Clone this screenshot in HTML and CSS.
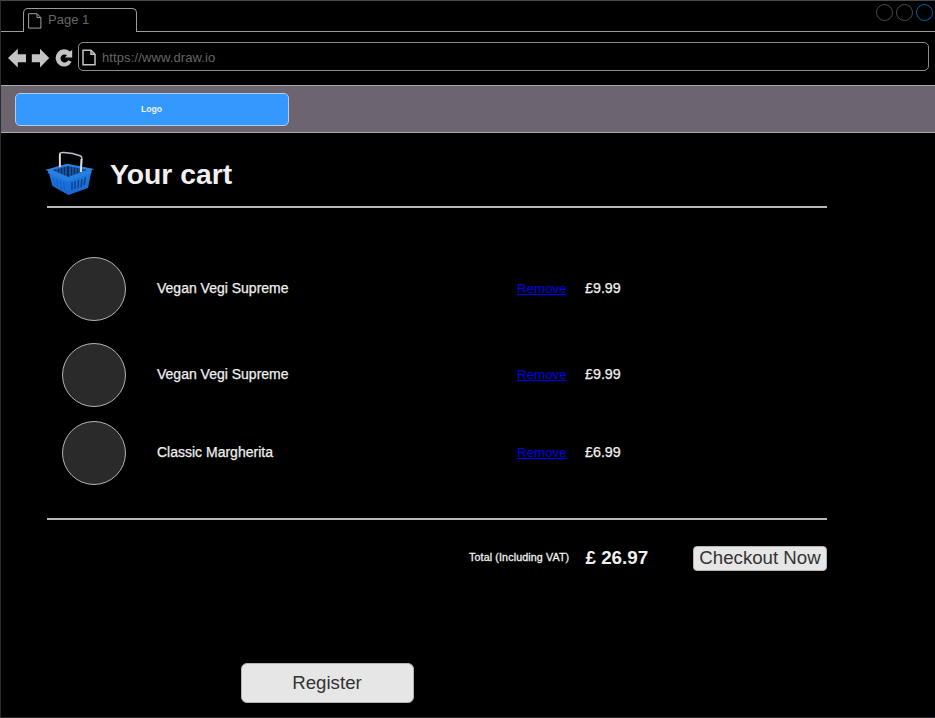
FILE: index.html
```html
<!DOCTYPE html>
<html lang="en">
<head>
<meta charset="utf-8">
<title>Your cart</title>
<link rel="stylesheet" href="styles.css">
</head>
<body>
<div class="window">
  <header class="tabs">
    <div class="tab-lead"></div>
    <div class="tab">
      <svg width="14" height="16" viewBox="0 0 14 16"><path d="M.6.7H9L12.9 4.6V15.1H.6ZM9 .7V4.6H12.9" fill="none" stroke="#a0a0a0"/></svg>
      <span>Page 1</span>
    </div>
    <div class="tab-rest">
      <i class="dot"></i><i class="dot"></i><i class="dot blue"></i>
    </div>
  </header>
  <div class="toolbar">
    <svg class="nav" width="78" height="28" viewBox="0 42 78 28">
      <g fill="#c4c4c4"><path d="M8 58L17.8 48.7V54.2H26V62.2H17.8V67.4Z"/><path d="M49.2 58L40 48.7V54.2H31.8V62.2H40V67.4Z"/><path d="M72.2 50V57.5H64.7L67 55.4A4 4 0 1 0 68.2 60.2L71.6 61.8A8.4 8.6 0 1 1 69.8 51.6Z"/></g>
    </svg>
    <div class="address">
      <svg width="14" height="17" viewBox="0 0 14 17"><path d="M1 1.3H9L13 5.3V15.7H1ZM9 1.3V5.3H13" fill="none" stroke="#c4c4c4" stroke-width="1.5"/></svg>
      <span>https://www.draw.io</span>
    </div>
  </div>
  <div class="brand"><div class="logo">Logo</div></div>
  <main>
    <div class="heading">
      <svg width="48" height="46" viewBox="46 150 48 46">
        <defs><linearGradient id="front" x2="0" y2="1"><stop stop-color="#2383ed"/><stop offset="1" stop-color="#1765d2"/></linearGradient></defs>
        <path d="M47.5 170L67 164L92 169L91 173L88 188L68.5 195L52.5 186L49 173Z" fill="url(#front)"/>
        <path d="M53 170L68 166L87 170L68 177Z" fill="#092e62"/>
        <path d="M57 168V173M60 167V174M63 166.5V175M66 166V176M70 166V176M73 167V175M76 168V174M79 168V173M83 169V172" stroke="#2874c9"/>
        <path d="M48 170L67 164.7L91.3 169.3L68.5 178Z" fill="none" stroke="#2c80dc" stroke-width="1.8"/>
        <path d="M48 172L68.5 180L91.3 171.5" fill="none" stroke="#277fe2" stroke-width="2.4"/>
        <path d="M53 178L55 185M56.5 179L58 187M60 180L61.5 189M63.5 182L64.5 190" stroke="#155dbb"/>
        <path d="M72 182V190M75 181V189M78.5 180L78 188M82 179L81 187M85.5 177L84 185" stroke="#104288" stroke-width="1.5"/>
        <path d="M59.8 167V153.8Q60 152.3 64 152.5Q73 153 80 155.8Q82 156.5 81.8 159L81 172" fill="none" stroke="#b9c0d0" stroke-width="1.5"/>
        <path d="M59.8 154V167M81.4 159L80.9 172" stroke="#dce0ea" stroke-width="1.8"/>
      </svg>
      <h1>Your cart</h1>
    </div>
    <div class="items">
      <div class="item"><i class="photo"></i><span class="name">Vegan Vegi Supreme</span><a href="#">Remove</a><span class="price">£9.99</span></div>
      <div class="item second"><i class="photo"></i><span class="name">Vegan Vegi Supreme</span><a href="#">Remove</a><span class="price">£9.99</span></div>
      <div class="item third"><i class="photo"></i><span class="name">Classic Margherita</span><a href="#">Remove</a><span class="price">£6.99</span></div>
    </div>
    <div class="summary">
      <span class="label">Total (Including VAT)</span>
      <strong>£ 26.97</strong>
      <button class="checkout">Checkout Now</button>
    </div>
    <button class="register">Register</button>
  </main>
</div>
</body>
</html>
```

FILE: styles.css
```css
* { box-sizing: border-box; }
body { margin: 0; background: #000; font-family: "Liberation Sans", Arial, sans-serif; color: #f0f0f0; }
.window { width: 935px; height: 718px; overflow: hidden; border-top: 1px solid #484848; border-left: 1px solid #2c2c2c; border-bottom: 1px solid #2c252b; }
svg { display: block; flex: none; }
.tabs { display: flex; height: 31px; }
.tab-lead { width: 22px; border-bottom: 1px solid #9c9c9c; }
.tab { width: 114px; height: 24px; margin-top: 7px; border: 1px solid #9c9c9c; border-bottom: 0; border-radius: 5px 5px 0 0; padding: 3px 0 0 4px; display: flex; gap: 6px; font-size: 13px; line-height: 16px; color: #666; }
.tab svg { margin-top: 1px; }
.tab-rest { flex: 1; border-bottom: 1px solid #9c9c9c; display: flex; justify-content: flex-end; gap: 3px; padding: 3px 2px 0 0; }
.dot { width: 17px; height: 17px; border: 1px solid #4c4c4c; border-radius: 50%; }
.dot.blue { border-color: #0864b4; }
.toolbar { height: 53px; padding-top: 10px; display: flex; }
.nav { margin-left: -1px; }
.address { width: 851px; height: 29px; border: 1px solid #8c8c8c; border-radius: 5px; display: flex; align-items: center; gap: 6px; padding: 1px 0 0 3px; font-size: 13px; letter-spacing: .11px; color: #666; }
.brand { height: 48px; margin-left: -1px; background: #6c6570; border: solid #aaa; border-width: 1px 0; padding: 7px 0 0 15px; }
.logo { width: 274px; height: 33px; border-radius: 5px; background: #3399ff; border: 1px solid #b4ccec; text-align: center; font-size: 8.67px; font-weight: bold; line-height: 30px; padding-right: 1px; }
main { width: 780px; margin-left: 46px; }
.heading { height: 75px; border-bottom: 2px solid #b8b8b8; display: flex; gap: 16px; padding-top: 17px; }
.heading svg { margin-left: -1px; }
h1 { margin: 8px 0 0; font-size: 28.3px; line-height: 32px; }
.items { height: 312px; border-bottom: 2px solid #b8b8b8; padding: 49px 0 0 15px; }
.item { height: 64px; display: grid; grid-template-columns: 95px 360px 68px 80px; align-items: center; font-size: 14px; line-height: 18px; }
.second { margin-top: 22px; }
.third { margin-top: 14px; }
.photo { width: 64px; height: 64px; border: 1px solid #b4b4b4; border-radius: 50%; background: #2a2a2a; }
.name, .price { margin-top: -2px; -webkit-text-stroke: .25px #f0f0f0; }
.price { font-size: 14.3px; }
.item a { color: #00e; font-size: 13.33px; }
.summary { display: flex; align-items: center; height: 24px; margin-top: 26px; padding-left: 422px; }
.label { width: 117px; margin-top: -2px; font-size: 10.67px; letter-spacing: .14px; -webkit-text-stroke: .3px #f0f0f0; }
strong { width: 108px; margin-top: -1px; font-size: 18.8px; }
button { display: block; flex: none; padding: 0; border: 1px solid #b4b4b4; background: #e6e6e6; color: #333; font: 18.67px/22px "Liberation Sans", Arial, sans-serif; }
.checkout { width: 134px; height: 25px; border-radius: 4px; }
.register { width: 173px; height: 40px; border-radius: 6px; margin: 93px 0 0 194px; padding-right: 1px; }
```
